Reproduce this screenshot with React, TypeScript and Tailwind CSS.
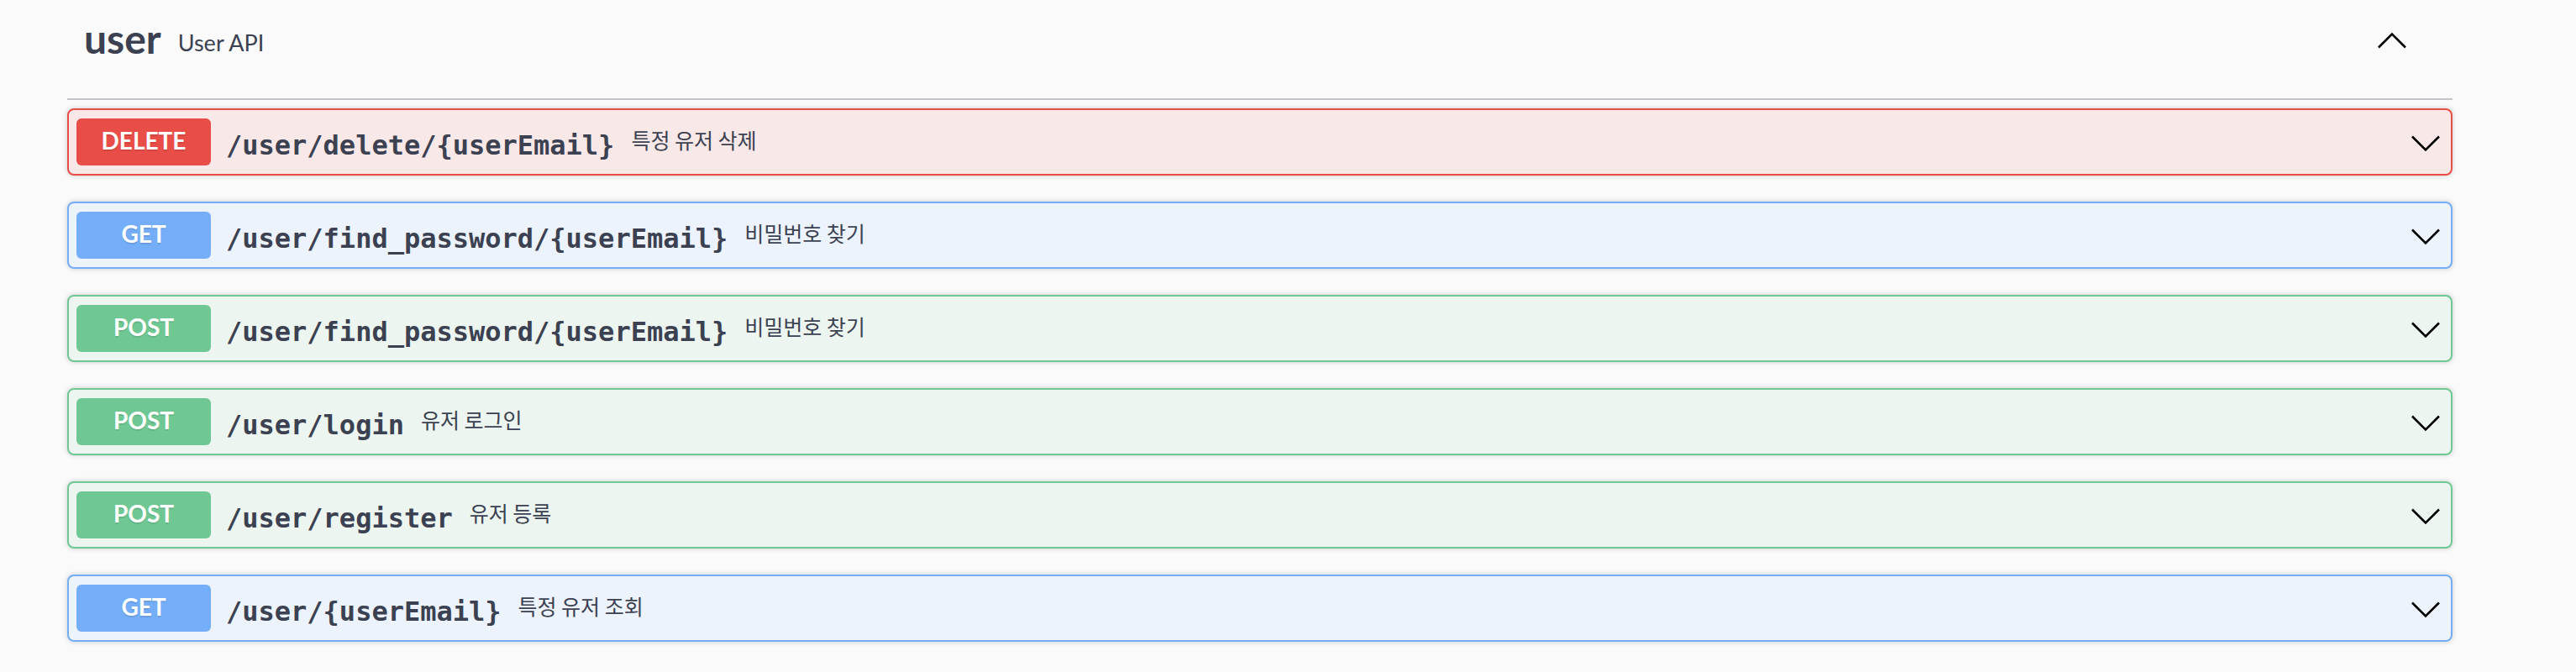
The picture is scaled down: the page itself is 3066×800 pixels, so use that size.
import React from 'react'

type Method = 'DELETE' | 'GET' | 'POST'

interface Operation {
  method: Method
  path: string
  summary: string
}

const operations: Operation[] = [
  { method: 'DELETE', path: '/user/delete/{userEmail}', summary: '특정 유저 삭제' },
  { method: 'GET', path: '/user/find_password/{userEmail}', summary: '비밀번호 찾기' },
  { method: 'POST', path: '/user/find_password/{userEmail}', summary: '비밀번호 찾기' },
  { method: 'POST', path: '/user/login', summary: '유저 로그인' },
  { method: 'POST', path: '/user/register', summary: '유저 등록' },
  { method: 'GET', path: '/user/{userEmail}', summary: '특정 유저 조회' },
]

const methodStyles: Record<Method, { box: string; badge: string }> = {
  DELETE: { box: 'border-[#e84e47] bg-[#f9e8e8]', badge: 'bg-[#e84e47]' },
  GET: { box: 'border-[#74aef8] bg-[#ecf3fc]', badge: 'bg-[#74aef8]' },
  POST: { box: 'border-[#6fc893] bg-[#ecf5f0]', badge: 'bg-[#6fc893]' },
}

function Chevron({ up = false }: { up?: boolean }) {
  return (
    <svg width="42" height="42" viewBox="0 0 42 42" className="shrink-0" aria-hidden="true">
      <polyline
        points={up ? '5,27.5 21,11.5 37,27.5' : '5,14.5 21,30.5 37,14.5'}
        fill="none"
        stroke="#000"
        strokeWidth="2.6"
      />
    </svg>
  )
}

function OperationRow({ op }: { op: Operation }) {
  const s = methodStyles[op.method]
  return (
    <div
      className={`flex h-[80px] items-center rounded-[8px] border-2 pl-[9px] pr-[9px] shadow-[0_0_6px_rgba(0,0,0,0.19)] ${s.box}`}
    >
      {/* Method badge */}
      <span
        className={`flex h-[56px] w-[160px] shrink-0 items-center justify-center rounded-[6px] pb-[5px] font-['Lato',sans-serif] text-[28px] leading-none font-bold text-white [text-shadow:0_2px_0_rgba(0,0,0,0.1)] ${s.badge}`}
      >
        {op.method}
      </span>
      {/* Path */}
      <span className="pl-[18px] pr-[20px] pt-[8px] font-['DejaVu_Sans_Mono',monospace] text-[32px] leading-none font-bold text-[#3b4151]">
        {op.path}
      </span>
      {/* Summary */}
      <span className="mb-[6px] font-['Noto_Sans_CJK_KR',sans-serif] text-[25px] leading-none text-[#3b4151]">
        {op.summary}
      </span>
      <div className="flex-1" />
      <Chevron />
    </div>
  )
}

export default function App() {
  return (
    <div className="min-h-[800px] w-full bg-[#fafafa]">
      <div className="ml-[80px] w-[2839px] pt-[10px]">
        {/* Tag header */}
        <div className="border-b-2 border-[#c4c4ca] pb-[27px]">
          <div className="flex h-[80px] items-center pl-[20px] pr-[51px]">
            <span className="mb-[9px] font-['Lato',sans-serif] text-[48px] leading-none font-bold text-[#3b4151]">
              user
            </span>
            <span className="ml-[20px] font-['Lato',sans-serif] text-[27px] leading-none text-[#3b4151]">
              User API
            </span>
            <div className="flex-1" />
            <Chevron up />
          </div>
        </div>

        {/* Operations */}
        <div className="mt-[10px] flex flex-col gap-[31px]">
          {operations.map((op, i) => (
            <OperationRow key={i} op={op} />
          ))}
        </div>
      </div>
    </div>
  )
}
